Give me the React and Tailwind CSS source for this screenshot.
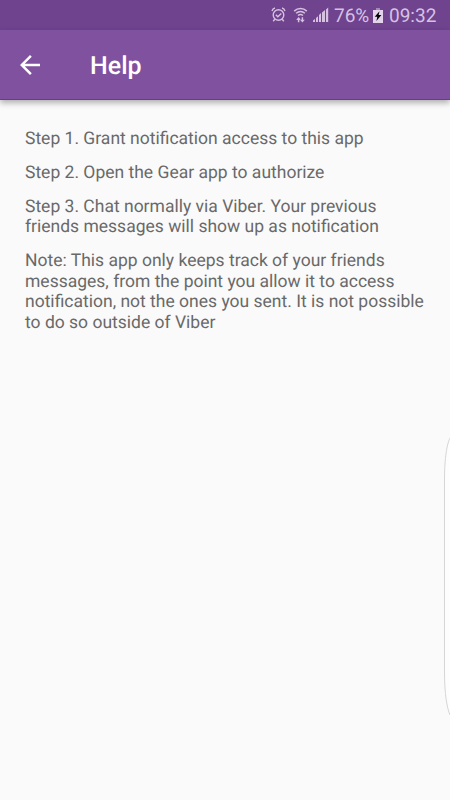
import React from 'react';

const steps = [
  'Step 1. Grant notification access to this app',
  'Step 2. Open the Gear app to authorize',
  'Step 3. Chat normally via Viber. Your previous friends messages will show up as notification',
  'Note: This app only keeps track of your friends messages, from the point you allow it to access notification, not the ones you sent. It is not possible to do so outside of Viber',
];

const AlarmIcon = () => (
  <svg width="15" height="16" viewBox="0 0 15 16" fill="none" stroke="currentColor" strokeWidth="1.4">
    <circle cx="7.5" cy="8" r="5.3" />
    <path d="M4.8 7.8l2 2 3.5-3.3M1 4C1.4 2.5 2.5 1.3 4 1M14 4c-.4-1.5-1.5-2.7-3-3M3.8 12.3l-1.6 2M11.2 12.3l1.6 2" />
  </svg>
);

const WifiIcon = () => (
  <svg width="15" height="16" viewBox="0 0 15 16" fill="none" stroke="currentColor" strokeWidth="1.5">
    <path d="M1.2 4.1c3.6-3.4 9-3.4 12.6 0M3.1 6.3c2.6-2.3 6.2-2.3 8.8 0M5 8.5c1.5-1.2 3.5-1.2 5 0" />
    <path d="M5.6 11.5v3.7M9.4 10.3v3.4" />
    <path d="M3.2 12.9l2.4-2.9 2.4 2.9zM7 12.7l2.4 2.9 2.4-2.9z" fill="currentColor" stroke="none" />
  </svg>
);

const SignalIcon = () => (
  <svg width="16" height="16" viewBox="0 0 16 16" fill="currentColor">
    <path d="M0 15v-1.5L2 12v3zM3 15v-4l2-1.7V15zM6 15V8l2-2v9zM9 15V5.500L12 3v12zM13 15V2.500L15.200.5V15z" />
  </svg>
);

const BatteryIcon = () => (
  <svg width="10" height="15" viewBox="0 0 10 15">
    <path d="M3 0h4v2H3z" fill="#a587b8" />
    <path d="M0 2h10v13H0z" fill="#e3d3ec" />
    <path d="M6.5 3.3L1.7 8.8h2.6L3.4 13l5-6H5.6z" fill="#000" />
  </svg>
);

const StatusBar = () => (
  <div className="flex h-[30px] items-center justify-end bg-[#6f438e] pr-[14px] text-[#d6c1e2]">
    <AlarmIcon />
    <div className="ml-[7px] flex">
      <WifiIcon />
    </div>
    <div className="ml-[5px] flex">
      <SignalIcon />
    </div>
    <span className="ml-[5px] w-[36px] whitespace-nowrap pt-px text-[19px] leading-[30px]">76%</span>
    <div className="ml-[3px] flex">
      <BatteryIcon />
    </div>
    <span className="ml-[6px] w-[47px] whitespace-nowrap pt-px text-[19px] leading-[30px]">09:32</span>
  </div>
);

const AppBar = () => (
  <header className="flex h-[70px] items-center border-b border-[#70378f] bg-[#7f519e] pl-5 text-white shadow-[0_3px_6px_rgba(0,0,0,0.3)]">
    <button aria-label="Back" className="flex">
      <svg width="20" height="20" viewBox="4 4 16 16" fill="currentColor">
        <path d="M20 11H7.83l5.59-5.59L12 4l-8 8 8 8 1.41-1.41L7.83 13H20v-2z" />
      </svg>
    </button>
    <h1 className="ml-[50px] pt-[5px] text-[25px] font-medium leading-[30px]">Help</h1>
  </header>
);

const App = () => {
  return (
    <div className="relative h-[800px] w-[450px] overflow-hidden bg-[#fafafa] font-['Roboto',sans-serif] [text-rendering:geometricPrecision]">
      <StatusBar />
      <AppBar />
      <main className="flex flex-col gap-[13.2px] pl-[25px] pr-[20px] pt-[29px] text-[17.5px] leading-[20.6px] text-[#696969]">
        {steps.map((step) => (
          <p key={step}>{step}</p>
        ))}
      </main>

      {/* edge panel handle */}
      <svg className="absolute right-0 top-[434px]" width="8" height="286" viewBox="0 0 8 286">
        <path d="M8 4C5 10 2.5 24 2.5 46v192c0 22 2.5 36 5.5 43" fill="#fdfdfd" stroke="#d6d6d6" strokeWidth="1" />
      </svg>
    </div>
  );
};

export default App;
